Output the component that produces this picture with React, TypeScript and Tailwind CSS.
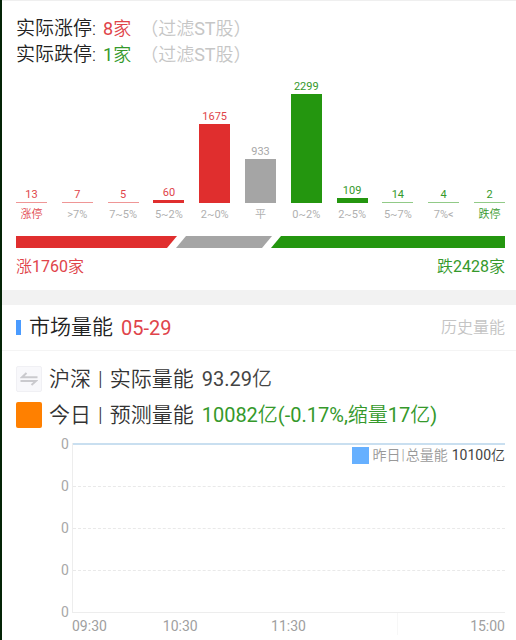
import clsx from "clsx"
import type { ReactNode } from "react"

type Tone = "up" | "flat" | "down"

type Bucket = {
  label: string
  count: number
  tone: Tone
}

const buckets: Bucket[] = [
  { label: "涨停", count: 13, tone: "up" },
  { label: ">7%", count: 7, tone: "up" },
  { label: "7~5%", count: 5, tone: "up" },
  { label: "5~2%", count: 60, tone: "up" },
  { label: "2~0%", count: 1675, tone: "up" },
  { label: "平", count: 933, tone: "flat" },
  { label: "0~2%", count: 2299, tone: "down" },
  { label: "2~5%", count: 109, tone: "down" },
  { label: "5~7%", count: 14, tone: "down" },
  { label: "7%<", count: 4, tone: "down" },
  { label: "跌停", count: 2, tone: "down" },
]

const MAX_BAR = 109
const maxCount = Math.max(...buckets.map((b) => b.count))

const textTone = {
  up: "text-[#e0444a]",
  flat: "text-[#a8a8a8]",
  down: "text-[#35992b]",
}

const barTone = {
  up: "bg-[#e02e2e]",
  flat: "bg-[#a5a5a5]",
  down: "bg-[#24960f]",
}

/* Latin digits sit a step heavier than the Chinese text around them */
function Num({ children }: { children: ReactNode }) {
  return <span className="font-normal">{children}</span>
}

function LimitRow({ label, count, tone }: { label: string; count: number; tone: Tone }) {
  return (
    <p className="flex text-[19px] leading-[26px] whitespace-pre text-[#222]">
      {label}:
      <span className={clsx("ml-[7px] text-[18px]", textTone[tone])}>
        <Num>{count}</Num>家
      </span>
      <span className="ml-[9px] text-[18px] text-[#c6c6c6]">
        （过滤<Num>ST</Num>股）
      </span>
    </p>
  )
}

function Distribution() {
  return (
    <div className="mt-3 flex items-end justify-between">
      {buckets.map((b) => {
        const height = Math.max(1, Math.round((b.count / maxCount) * MAX_BAR))
        const isLimit = b.label.endsWith("停")
        return (
          <div key={b.label} className="flex w-[31px] flex-col items-center whitespace-nowrap">
            <span className={clsx("text-[11px] leading-[14px] font-normal", textTone[b.tone])}>
              {b.count}
            </span>
            <div
              className={clsx("w-full", barTone[b.tone], height === 1 && "opacity-50")}
              style={{ height }}
            />
            <span
              className={clsx(
                "mt-1 text-[11px] leading-4",
                isLimit ? textTone[b.tone] : "font-normal text-[#b0b0b0]"
              )}
            >
              {b.label}
            </span>
          </div>
        )
      })}
    </div>
  )
}

/* Slanted rise / flat / fall proportions */
function RatioBar() {
  return (
    <div className="mt-[13px] flex h-3">
      <div className="grow-[161] basis-0 bg-[#e02e2e] [clip-path:polygon(0_0,100%_0,calc(100%-10px)_100%,0_100%)]" />
      <div className="-ml-px grow-[96] basis-0 bg-[#a5a5a5] [clip-path:polygon(10px_0,100%_0,calc(100%-10px)_100%,0_100%)]" />
      <div className="-ml-px grow-[234] basis-0 bg-[#24960f] [clip-path:polygon(10px_0,100%_0,100%_100%,0_100%)]" />
    </div>
  )
}

function VolumeChart() {
  return (
    <div className="mt-2 flex pl-[45px]">
      <div className="flex w-[11px] flex-col text-sm leading-4 font-normal text-[#a8a8a8]">
        {[0, 1, 2, 3, 4].map((i) => (
          <span key={i} className="mb-[26px] last:mb-0">0</span>
        ))}
      </div>
      <div className="grow pt-[7px]">
        <div className="border-b border-l border-[#ededed]">
          <div className="h-[43px] border-t-2 border-[#c9dff0]">
            <div className="mt-px flex items-center justify-end text-sm leading-[18px] text-[#999]">
              <span className="mr-1 size-[17px] bg-[#66b0ff]" />
              昨日
              <span className="mx-px">|</span>
              总量能
              <span className="ml-1 text-[#444]">
                <Num>10100</Num>亿
              </span>
            </div>
          </div>
          <div className="h-[42px] border-t border-dashed border-[#e9e9e9]" />
          <div className="h-[42px] border-t border-dashed border-[#e9e9e9]" />
          <div className="h-[42px] border-t border-dashed border-[#e9e9e9]" />
        </div>
        <div className="grid grid-cols-4 text-sm leading-[18px] font-normal text-[#a0a0a0]">
          <span className="pt-1">09:30</span>
          <span className="-translate-x-1/2 pt-1 text-center">10:30</span>
          <span className="-translate-x-1/2 pt-1 text-center">11:30</span>
          <span className="border-l border-[#f7f7f7] pt-1 text-right">15:00</span>
        </div>
      </div>
    </div>
  )
}

export default function App() {
  return (
    <div className="flex min-h-screen bg-white font-['Roboto','Noto_Sans_CJK_SC',sans-serif] font-[350]">
      <div className="w-[2px] shrink-0 bg-[#042407]" />
      <main className="min-w-0 grow border-t border-[#efefef]">
        <section className="pt-[15px] pr-[11px] pb-[13px] pl-[14px]">
          <LimitRow label="实际涨停" count={8} tone="up" />
          <LimitRow label="实际跌停" count={1} tone="down" />
          <Distribution />
          <RatioBar />
          <div className="mt-[9px] flex justify-between text-base leading-5">
            <span className={textTone.up}>涨<Num>1760</Num>家</span>
            <span className={textTone.down}>跌<Num>2428</Num>家</span>
          </div>
        </section>

        <div className="h-[15px] bg-[#f2f2f2]" />

        <section>
          <header className="flex h-[46px] items-center border-b border-[#f4f4f4] pr-[11px] pl-[14px]">
            <span className="h-[15px] w-[5px] bg-[#4a9bff]" />
            <h2 className="ml-2 text-[21px] font-[350] text-[#222]">市场量能</h2>
            <span className={clsx("ml-2 text-[20px] font-normal", textTone.up)}>05-29</span>
            <a href="#history" className="ml-auto text-base text-[#c4c4c4]">历史量能</a>
          </header>

          <div className="pt-[15px] pr-[11px] pl-[14px]">
            <div className="flex items-center text-[21px] leading-[26px] text-[#333]">
              <button
                type="button"
                aria-label="切换市场"
                className="mr-[7px] flex size-[26px] items-center justify-center rounded-xs border border-[#f0f0f4] bg-[#f8f8fb]"
              >
                <svg viewBox="0 0 18 14" className="h-[14px] w-[18px]" fill="none" stroke="#cacace" strokeWidth="2">
                  <path d="M6.5 1 L2 5.2 H17.5" />
                  <path d="M0.5 9 H16 L11.5 13" />
                </svg>
              </button>
              沪深
              <span className="mx-[7px]">|</span>
              实际量能
              <span className="ml-2 text-[20px] text-[#444]">
                <Num>93.29</Num>亿
              </span>
            </div>
            <div className="mt-[10px] flex items-center text-[21px] leading-[26px] text-[#333]">
              <span className="mr-[7px] size-[26px] rounded-xs bg-[#ff8000]" />
              今日
              <span className="mx-[7px]">|</span>
              预测量能
              <span className={clsx("ml-2 text-[20px]", textTone.down)}>
                <Num>10082</Num>亿<Num>(-0.17%,</Num>缩量<Num>17</Num>亿<Num>)</Num>
              </span>
            </div>
            <VolumeChart />
          </div>
        </section>
      </main>
    </div>
  )
}
